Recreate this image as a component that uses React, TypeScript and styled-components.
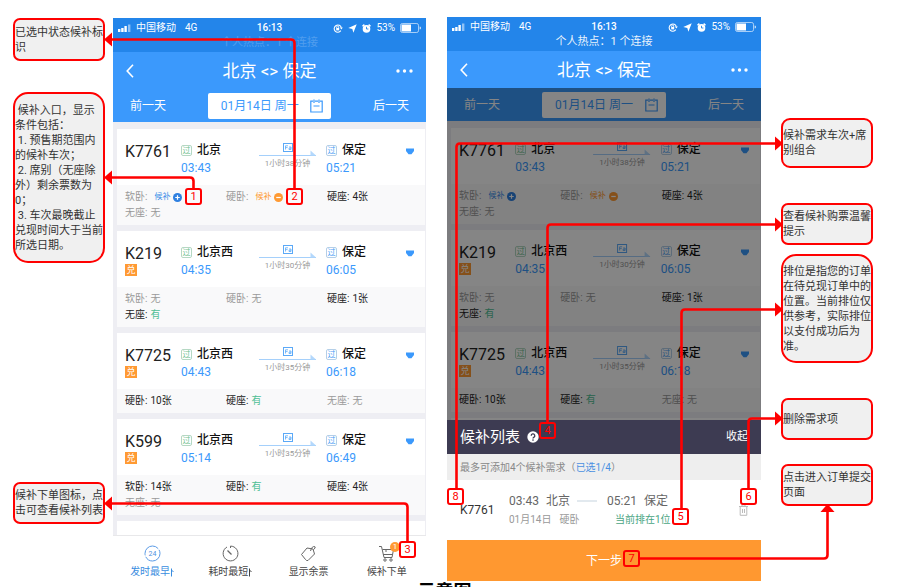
import React from "react";
import styled, { createGlobalStyle, css } from "styled-components";

const RED = "#ff0000";
const BLUE = "#3b99fc";
const STATUS_BLUE = "#2385ea";
const ORANGE = "#ff9a33";
const GREEN = "#4fbf95";

const GlobalStyle = createGlobalStyle`
  * { box-sizing: border-box; }
  body {
    margin: 0;
    background: #ffffff;
    font-family: Roboto, "Noto Sans CJK SC", sans-serif;
    color: #333333;
    overflow: hidden;
  }
  button {
    border: 0;
    padding: 0;
    margin: 0;
    background: none;
    font: inherit;
    color: inherit;
    cursor: pointer;
  }
  svg { display: block; flex: none; }
  h1, h2, h3, p { margin: 0; font-weight: 400; }
`;

/* ---------- page ---------- */

const Page = styled.main`
  height: 100vh;
  overflow: hidden;
`;

const Board = styled.div`
  position: relative;
  display: grid;
  grid-template-columns: 113fr 313fr 21fr 314fr 139fr;
  align-items: start;
`;

const Caption = styled.h1`
  font-size: 18px;
  line-height: 18px;
  font-weight: 700;
  text-align: center;
  color: #000000;
  padding-right: 11px;
`;

/* ---------- notes ---------- */

const NoteColumn = styled.aside<{ $side: "left" | "right" }>`
  display: flex;
  flex-direction: column;
  padding: ${(p) => (p.$side === "left" ? "18px 8px 0 13px" : "118px 27px 0 20px")};
`;

const NoteBox = styled.p<{ $height: number; $gap: number; $radius: number }>`
  display: flex;
  align-items: center;
  min-height: ${(p) => p.$height}px;
  margin-top: ${(p) => p.$gap}px;
  border: 2px solid ${RED};
  border-radius: ${(p) => p.$radius}px;
  background: #f0f0f0;
  font-size: 11px;
  line-height: 15px;
  white-space: pre;
  color: #333333;
`;

type Note = { text: string; height: number; gap: number; radius: number };

const leftNotes: Note[] = [
  { text: "已选中状态候补标\n识", height: 43, gap: 0, radius: 7 },
  {
    text:
      " 候补入口，显示\n条件包括：\n 1. 预售期范围内\n的候补车次；\n 2. 席别（无座除\n外）剩余票数为\n0；\n 3. 车次最晚截止\n兑现时间大于当前\n所选日期。",
    height: 171,
    gap: 31,
    radius: 15,
  },
  { text: "候补下单图标，点\n击可查看候补列表", height: 42, gap: 219, radius: 7 },
];

const rightNotes: Note[] = [
  { text: "候补需求车次+席\n别组合", height: 50, gap: 0, radius: 9 },
  { text: "查看候补购票温馨\n提示", height: 42, gap: 35, radius: 7 },
  {
    text: "排位是指您的订单\n在待兑现订单中的\n位置。当前排位仅\n供参考，实际排位\n以支付成功后为\n准。",
    height: 109,
    gap: 9,
    radius: 15,
  },
  { text: "删除需求项", height: 42, gap: 35, radius: 7 },
  { text: "点击进入订单提交\n页面", height: 42, gap: 24, radius: 7 },
];

const Notes = ({ side, items }: { side: "left" | "right"; items: Note[] }) => (
  <NoteColumn $side={side}>
    {items.map((n) => (
      <NoteBox key={n.text} $height={n.height} $gap={n.gap} $radius={n.radius}>
        {n.text}
      </NoteBox>
    ))}
  </NoteColumn>
);

/* ---------- connectors over the board ---------- */

const Connectors = styled.svg`
  position: absolute;
  top: 0;
  left: 0;
  width: 100%;
  height: 587px;
  pointer-events: none;
`;

const Marker = styled.span<{ $x: number; $y: number }>`
  position: absolute;
  left: ${(p) => (p.$x / 900) * 100}%;
  top: ${(p) => p.$y}px;
  width: 17px;
  height: 17px;
  display: grid;
  place-items: center;
  border: 2px solid ${RED};
  border-radius: 3px;
  font-size: 11px;
  line-height: 11px;
  color: ${RED};
`;

const markers = [
  { n: 1, x: 185, y: 188 },
  { n: 2, x: 286, y: 188 },
  { n: 3, x: 399, y: 541 },
  { n: 4, x: 539, y: 422 },
  { n: 5, x: 672, y: 508 },
  { n: 6, x: 740, y: 488 },
  { n: 7, x: 623, y: 550 },
  { n: 8, x: 447, y: 488 },
];

const wires = [
  "M193.5 188V181Q193.5 177.5 190 177.5H112",
  "M294.5 188V43Q294.5 39.5 291 39.5H112",
  "M407.5 541V507Q407.5 503.5 404 503.5H112",
  "M547.5 422V228Q547.5 224.5 551 224.5H776",
  "M681.5 508V313Q681.5 309.5 685 309.5H776",
  "M748.5 488V422Q748.5 418.5 752 418.5H776",
  "M640 558.5H824Q827.5 558.5 827.5 555V511",
  "M456.5 488V147Q456.5 143.5 460 143.5H776",
];

const leftHeads = [39.5, 177.5, 503.5];
const rightHeads = [143.5, 224.5, 309.5, 418.5];

const Annotations = () => (
  <>
    <Connectors viewBox="0 0 900 587" preserveAspectRatio="none" aria-hidden="true">
      <g fill="none" stroke={RED} strokeWidth="2.6">
        {wires.map((d) => (
          <path key={d} d={d} />
        ))}
      </g>
      <g fill={RED}>
        {leftHeads.map((y) => (
          <path key={y} d={`M104 ${y}L112 ${y - 7}V${y + 7}Z`} />
        ))}
        {rightHeads.map((y) => (
          <path key={y} d={`M783 ${y}L775 ${y - 7}V${y + 7}Z`} />
        ))}
        <path d="M827.5 504L820.500 512H834.500Z" />
      </g>
    </Connectors>
    {markers.map((m) => (
      <Marker key={m.n} $x={m.x} $y={m.y}>
        {m.n}
      </Marker>
    ))}
  </>
);

/* ---------- phone ---------- */

const Phone = styled.section<{ $top: number }>`
  margin-top: ${(p) => p.$top}px;
  display: flex;
  flex-direction: column;
  min-width: 0;
`;

const StatusBar = styled.header`
  height: 34px;
  padding: 3px 5px 0;
  background: ${STATUS_BLUE};
  color: #ffffff;
`;

const StatusRow = styled.div`
  display: grid;
  grid-template-columns: 1fr auto 1fr;
  align-items: center;
  height: 14px;
  font-size: 10px;
  line-height: 14px;
`;

const StatusGroup = styled.div<{ $end?: boolean }>`
  display: flex;
  align-items: center;
  gap: ${(p) => (p.$end ? 5 : 4)}px;
  justify-content: ${(p) => (p.$end ? "flex-end" : "flex-start")};
`;

const Network = styled.span`
  margin-left: 5px;
`;

const Clock = styled.span`
  font-weight: 500;
`;

const Hotspot = styled.p<{ $faint: boolean }>`
  font-size: 11px;
  line-height: 16px;
  text-align: center;
  opacity: ${(p) => (p.$faint ? 0.2 : 0.9)};
`;

const NavBar = styled.nav`
  display: grid;
  grid-template-columns: 34px 1fr 44px;
  align-items: center;
  height: 37px;
  background: ${BLUE};
  color: #ffffff;
`;

const NavTitle = styled.h2`
  padding-left: 10px;
  font-size: 17px;
  line-height: 20px;
  text-align: center;
`;

const NavButton = styled.button`
  display: flex;
  justify-content: center;
`;

const Body = styled.div<{ $dim: boolean; $height: number }>`
  position: relative;
  height: ${(p) => p.$height}px;
  overflow: hidden;
  ${(p) =>
    p.$dim &&
    css`
      &::after {
        content: "";
        position: absolute;
        inset: 0;
        background: rgba(0, 0, 0, 0.48);
      }
    `}
`;

const DateBar = styled.div`
  display: grid;
  grid-template-columns: 1fr 40% 1fr;
  align-items: center;
  height: 33px;
  padding: 0 17px;
  background: ${BLUE};
  color: #ffffff;
  font-size: 12px;
  line-height: 16px;
`;

const DayButton = styled.button<{ $align: "left" | "right" }>`
  text-align: ${(p) => p.$align};
`;

const DatePill = styled.button`
  display: flex;
  align-items: center;
  justify-content: space-between;
  height: 26px;
  margin: 0 -6px;
  padding: 0 8px 0 13px;
  border-radius: 2px;
  background: #ffffff;
  color: ${BLUE};
  white-space: nowrap;
`;

const TrainList = styled.div`
  display: flex;
  flex-direction: column;
  gap: 6px;
  padding: 7px 1px 0 4px;
  background: #eeeef3;
`;

const Card = styled.article`
  background: #ffffff;
`;

const CardInfo = styled.div`
  display: grid;
  grid-template-columns: 56fr 78fr 57fr 90fr 19fr;
  height: 56px;
  padding: 13px 0 0 8px;
`;

const TrainNo = styled.h3`
  font-size: 16px;
  line-height: 20px;
  color: #222222;
`;

const Exchange = styled.span`
  display: grid;
  place-items: center;
  width: 12px;
  height: 12px;
  background: ${ORANGE};
  color: #ffffff;
  font-size: 9px;
  line-height: 12px;
`;

const Stop = styled.div<{ $arrival?: boolean }>`
  padding-left: ${(p) => (p.$arrival ? 10 : 0)}px;
`;

const Station = styled.div`
  display: flex;
  align-items: center;
  gap: 5px;
  height: 16px;
  font-size: 12px;
  line-height: 16px;
  font-weight: 500;
  color: #111111;
  white-space: nowrap;
`;

const PassMark = styled.span<{ $blue?: boolean }>`
  display: grid;
  place-items: center;
  width: 11px;
  height: 11px;
  border: 1px solid ${(p) => (p.$blue ? "#b4cfe8" : "#b5d8c3")};
  border-radius: 2px;
  font-size: 8px;
  line-height: 9px;
  font-weight: 400;
  color: ${(p) => (p.$blue ? "#4aa0f5" : "#6fbf8f")};
`;

const Time = styled.p`
  padding-top: 2px;
  font-size: 12px;
  line-height: 16px;
  color: ${BLUE};
`;

const Trip = styled.div`
  display: flex;
  flex-direction: column;
  align-items: center;
  font-size: 8px;
  line-height: 12px;
  color: #999999;
  white-space: nowrap;
  svg { width: 100%; }
`;

const Expand = styled.button`
  align-self: start;
  justify-self: start;
  padding-top: 6px;
`;

const Seats = styled.div`
  display: grid;
  grid-template-columns: 101fr 101fr 98fr;
  padding: 4px 0 4px 8px;
  background: #f9f9fa;
  font-size: 10px;
  line-height: 16px;
`;

const Seat = styled.span<{ $muted: boolean; $waiting: boolean }>`
  display: flex;
  align-items: center;
  gap: ${(p) => (p.$waiting ? 7 : 3)}px;
  color: ${(p) => (p.$muted ? "#999999" : "#222222")};
  white-space: nowrap;
`;

const SeatValue = styled.span<{ $tone: string }>`
  display: inline-flex;
  align-items: center;
  color: ${(p) => p.$tone};
`;

const WaitLabel = styled.button`
  display: inline-flex;
  align-items: center;
  gap: 3px;
  font-size: 8px;
  line-height: 12px;
`;

/* ---------- tab bar ---------- */

const TabBar = styled.nav`
  display: grid;
  grid-template-columns: repeat(4, 1fr);
  height: 48px;
  border-top: 1px solid #e8e8ea;
  background: #ffffff;
`;

const Tab = styled.button<{ $active?: boolean }>`
  position: relative;
  display: flex;
  flex-direction: column;
  align-items: center;
  gap: 3px;
  padding-top: 9px;
  font-size: 10px;
  line-height: 14px;
  color: ${(p) => (p.$active ? "#3a8de0" : "#444444")};
`;

const TabLabel = styled.span`
  display: flex;
  align-items: center;
  gap: 1px;
`;

const CartCount = styled.span`
  position: absolute;
  top: 6px;
  left: calc(50% + 3px);
  width: 10px;
  height: 10px;
  border-radius: 5px;
  background: ${ORANGE};
  color: #ffffff;
  font-size: 8px;
  line-height: 10px;
`;

/* ---------- waiting-list sheet ---------- */

const SheetHeader = styled.div`
  display: flex;
  align-items: center;
  gap: 7px;
  height: 34px;
  padding: 0 13px;
  background: #3d3b52;
  color: #ffffff;
`;

const SheetTitle = styled.h3`
  font-size: 15px;
  line-height: 20px;
`;

const Collapse = styled.button`
  margin-left: auto;
  font-size: 11px;
  line-height: 16px;
`;

const SheetHint = styled.p`
  height: 26px;
  padding-left: 13px;
  background: #eeeeee;
  font-size: 10px;
  line-height: 27px;
  color: #888888;
`;

const Picked = styled.span`
  color: #4a90e2;
`;

const Request = styled.div`
  display: grid;
  grid-template-columns: 49fr 98fr 132fr 9px;
  align-items: center;
  height: 60px;
  padding: 0 13px;
  background: #ffffff;
`;

const RequestNo = styled.span`
  font-size: 12px;
  line-height: 16px;
`;

const RequestPart = styled.div`
  display: flex;
  flex-direction: column;
  gap: 3px;
  white-space: nowrap;
`;

const RequestMain = styled.span`
  display: flex;
  align-items: center;
  gap: 7px;
  font-size: 12px;
  line-height: 16px;
  color: #666666;
`;

const RequestSub = styled.span<{ $green?: boolean }>`
  display: flex;
  gap: 8px;
  padding-left: ${(p) => (p.$green ? 8 : 0)}px;
  font-size: 10px;
  line-height: 16px;
  color: ${(p) => (p.$green ? "#4aa583" : "#999999")};
`;

const NextButton = styled.button`
  height: 41px;
  background: #ff9830;
  color: #ffffff;
  font-size: 12px;
  line-height: 16px;
`;

/* ---------- icons ---------- */

const SignalIcon = () => (
  <svg width="14" height="9" viewBox="0 0 14 9" fill="#fff" aria-hidden="true">
    <rect x="0" y="5" width="2.400" height="3" />
    <rect x="3.200" y="4" width="2.400" height="4" />
    <rect x="6.400" y="2" width="2.400" height="6" />
    <rect x="10" y="0.500" width="2.400" height="7.500" opacity="0.5" />
  </svg>
);

const LockIcon = () => (
  <svg width="10" height="9" viewBox="0 0 10 9" fill="none" stroke="#fff" strokeWidth="1.100" aria-hidden="true">
    <path d="M7.800 6.600A3.600 3.600 0 1 1 8.300 3.700" />
    <path d="M6.800 3.600L8.400 5.400L9.800 3.600Z" fill="#fff" stroke="none" />
    <rect x="3.200" y="4" width="3" height="2.400" fill="#fff" stroke="none" />
    <path d="M3.700 4V3a1 1 0 0 1 2 0v1" strokeWidth="0.800" />
  </svg>
);

const LocationIcon = () => (
  <svg width="9" height="9" viewBox="0 0 9 9" fill="#fff" aria-hidden="true">
    <path d="M8.700 0.300L5.400 8.800L4.300 4.900L0.300 4Z" />
  </svg>
);

const AlarmIcon = () => (
  <svg width="9" height="9" viewBox="0 0 9 9" aria-hidden="true">
    <circle cx="4.500" cy="4.900" r="3.800" fill="#fff" />
    <path d="M0.500 2.200L2.400 0.600M8.500 2.200L6.600 0.600" stroke="#fff" strokeWidth="1.500" />
    <path d="M4.500 2.800V5H6.400" stroke={STATUS_BLUE} strokeWidth="0.900" fill="none" />
  </svg>
);

const BatteryIcon = () => (
  <svg width="21" height="10" viewBox="0 0 21 10" aria-hidden="true">
    <rect x="0.500" y="0.500" width="18" height="9" rx="1.800" fill="none" stroke="#fff" strokeOpacity="0.600" />
    <rect x="1.500" y="1.500" width="9.500" height="7" fill="#fff" />
    <path d="M19.600 3.500v3a1.500 1.500 0 0 0 0-3Z" fill="#fff" opacity="0.700" />
  </svg>
);

const BackIcon = () => (
  <svg width="8" height="14" viewBox="0 0 8 14" fill="none" stroke="#fff" strokeWidth="1.600" aria-hidden="true">
    <path d="M7 0.800L1.200 7L7 13.200" />
  </svg>
);

const MoreIcon = () => (
  <svg width="17" height="4" viewBox="0 0 17 4" fill="#fff" aria-hidden="true">
    <circle cx="2" cy="2" r="1.700" />
    <circle cx="8.500" cy="2" r="1.700" />
    <circle cx="15" cy="2" r="1.700" />
  </svg>
);

const CalendarIcon = () => (
  <svg width="13" height="14" viewBox="0 0 13 14" fill="none" stroke={BLUE} strokeWidth="1.200" aria-hidden="true">
    <path d="M3 2.200H0.800V13H12.200V2.200H10M5 2.200H8M4 0.500V4M9 0.500V4M3.500 7H9.500" />
  </svg>
);

const TripIcon = () => (
  <svg height="16" viewBox="0 0 57 16" fill="none" aria-hidden="true">
    <rect x="24.500" y="1.500" width="9" height="8" stroke="#5ba9f7" />
    <path d="M26.500 7.500V3.800H29M26.500 5.600H28.600M30 5H32M30 7.500H32V5M30 7.500V6.200H32" stroke="#5ba9f7" strokeWidth="0.800" />
    <path d="M0 13.500H57" stroke="#a5d0fb" strokeWidth="1.200" />
    <path d="M51.500 8.500L57 13.500H51.500Z" fill="#b4d8fc" />
  </svg>
);

const CaretIcon = () => (
  <svg width="8" height="7" viewBox="0 0 8 7" fill={BLUE} aria-hidden="true">
    <path d="M0 0.500H8V3L5.500 6.200H2.500L0 3Z" />
  </svg>
);

const CircleIcon = ({ plus }: { plus: boolean }) => (
  <svg width="9" height="9" viewBox="0 0 8 8" aria-hidden="true">
    <circle cx="4" cy="4" r="4" fill={plus ? "#2f80e0" : ORANGE} />
    <path d={plus ? "M2 4H6M4 2V6" : "M2 4H6"} stroke="#fff" strokeWidth="1.100" />
  </svg>
);

const ArrowUpIcon = () => (
  <svg width="3" height="9" viewBox="0 0 3 9" fill="none" stroke="currentColor" aria-hidden="true">
    <path d="M0.500 0.500V8.500M0.500 2L2.500 4" />
  </svg>
);

const ClockIcon = () => (
  <svg width="17" height="17" viewBox="0 0 17 17" aria-hidden="true">
    <circle cx="8.500" cy="8.500" r="7.500" fill="none" stroke="#5b9be6" strokeDasharray="20 1.500" />
    <text x="8.500" y="11" textAnchor="middle" fontSize="7" fill="#4a90e2">
      24
    </text>
  </svg>
);

const TimerIcon = () => (
  <svg width="17" height="17" viewBox="0 0 17 17" fill="none" stroke="#666" aria-hidden="true">
    <path d="M5 2A7.400 7.400 0 1 0 8.500 1.100V3" />
    <path d="M5.500 5.500L9.500 9.500" strokeWidth="1.300" />
  </svg>
);

const TagIcon = () => (
  <svg width="17" height="17" viewBox="0 0 17 17" fill="none" stroke="#666" aria-hidden="true">
    <path d="M1.500 9.500L7 3L13 4L14.500 9L8 15.500Q6.500 16 5.500 14.500Z" />
    <path d="M10.500 6Q12 0.500 15 1.800Q16 3 13.500 4.500" />
  </svg>
);

const CartIcon = () => (
  <svg width="17" height="17" viewBox="0 0 17 17" fill="none" stroke="#666" aria-hidden="true">
    <path d="M1 1.500H3.500L6 12.500H14L15.500 4.500H4.500M5.200 9.500H14.400M8 4.500V7" />
    <circle cx="7" cy="15" r="1.200" />
    <circle cx="13" cy="15" r="1.200" />
  </svg>
);

const HelpIcon = () => (
  <svg width="12" height="12" viewBox="0 0 12 12" aria-hidden="true">
    <circle cx="6" cy="6" r="5.700" fill="#fff" />
    <path d="M4.200 4.700a1.800 1.800 0 1 1 2.600 1.600q-.8.400-.8 1.100" fill="none" stroke="#3d3b52" strokeWidth="1.300" />
    <circle cx="6" cy="9.100" r="0.800" fill="#3d3b52" />
  </svg>
);

const DashIcon = () => (
  <svg width="20" height="2" viewBox="0 0 20 2" aria-hidden="true">
    <path d="M0 1H20" stroke="#c5d3de" />
  </svg>
);

const TrashIcon = () => (
  <svg width="9" height="12" viewBox="0 0 9 12" fill="none" stroke="#bbb" aria-hidden="true">
    <path d="M0 2.500H9M3 2.500V0.800H6V2.500M1.200 2.500V11.300H7.800V2.500M3.500 5V9M5.500 5V9" />
  </svg>
);

/* ---------- data ---------- */

type SeatInfo = { name: string; value: string; kind: "count" | "yes" | "none" | "add" | "added" };
type Train = {
  no: string;
  exchange: boolean;
  from: string;
  depart: string;
  arrive: string;
  duration: string;
  seats: SeatInfo[];
};

const trains: Train[] = [
  {
    no: "K7761",
    exchange: false,
    from: "北京",
    depart: "03:43",
    arrive: "05:21",
    duration: "1小时38分钟",
    seats: [
      { name: "软卧", value: "候补", kind: "add" },
      { name: "硬卧", value: "候补", kind: "added" },
      { name: "硬座", value: "4张", kind: "count" },
      { name: "无座", value: "无", kind: "none" },
    ],
  },
  {
    no: "K219",
    exchange: true,
    from: "北京西",
    depart: "04:35",
    arrive: "06:05",
    duration: "1小时30分钟",
    seats: [
      { name: "软卧", value: "无", kind: "none" },
      { name: "硬卧", value: "无", kind: "none" },
      { name: "硬座", value: "1张", kind: "count" },
      { name: "无座", value: "有", kind: "yes" },
    ],
  },
  {
    no: "K7725",
    exchange: true,
    from: "北京西",
    depart: "04:43",
    arrive: "06:18",
    duration: "1小时35分钟",
    seats: [
      { name: "硬卧", value: "10张", kind: "count" },
      { name: "硬座", value: "有", kind: "yes" },
      { name: "无座", value: "无", kind: "none" },
    ],
  },
  {
    no: "K599",
    exchange: true,
    from: "北京西",
    depart: "05:14",
    arrive: "06:49",
    duration: "1小时35分钟",
    seats: [
      { name: "软卧", value: "14张", kind: "count" },
      { name: "硬卧", value: "有", kind: "yes" },
      { name: "硬座", value: "4张", kind: "count" },
      { name: "无座", value: "无", kind: "none" },
    ],
  },
];

const tones = {
  count: "inherit",
  yes: GREEN,
  none: "inherit",
  add: "#3a8de8",
  added: ORANGE,
};

/* ---------- composed parts ---------- */

const SeatCell = ({ seat }: { seat: SeatInfo }) => {
  const waiting = seat.kind === "add" || seat.kind === "added";
  return (
    <Seat $muted={seat.kind === "none" || waiting} $waiting={waiting}>
      {seat.name}:
      <SeatValue $tone={tones[seat.kind]}>
        {waiting ? (
          <WaitLabel type="button">
            {seat.value}
            <CircleIcon plus={seat.kind === "add"} />
          </WaitLabel>
        ) : (
          seat.value
        )}
      </SeatValue>
    </Seat>
  );
};

const TrainCard = ({ train }: { train: Train }) => (
  <Card>
    <CardInfo>
      <div>
        <TrainNo>{train.no}</TrainNo>
        {train.exchange && <Exchange>兑</Exchange>}
      </div>
      <Stop>
        <Station>
          <PassMark>过</PassMark>
          {train.from}
        </Station>
        <Time>{train.depart}</Time>
      </Stop>
      <Trip>
        <TripIcon />
        {train.duration}
      </Trip>
      <Stop $arrival>
        <Station>
          <PassMark $blue>过</PassMark>
          保定
        </Station>
        <Time>{train.arrive}</Time>
      </Stop>
      <Expand type="button" aria-label="展开">
        <CaretIcon />
      </Expand>
    </CardInfo>
    <Seats>
      {train.seats.map((s) => (
        <SeatCell key={s.name} seat={s} />
      ))}
    </Seats>
  </Card>
);

const PhoneTop = ({ faint }: { faint: boolean }) => (
  <>
    <StatusBar>
      <StatusRow>
        <StatusGroup>
          <SignalIcon />
          <span>中国移动</span>
          <Network>4G</Network>
        </StatusGroup>
        <Clock>16:13</Clock>
        <StatusGroup $end>
          <LockIcon />
          <LocationIcon />
          <AlarmIcon />
          <span>53%</span>
          <BatteryIcon />
        </StatusGroup>
      </StatusRow>
      <Hotspot $faint={faint}>个人热点：1 个连接</Hotspot>
    </StatusBar>
    <NavBar>
      <NavButton type="button" aria-label="返回">
        <BackIcon />
      </NavButton>
      <NavTitle>北京 &lt;&gt; 保定</NavTitle>
      <NavButton type="button" aria-label="更多">
        <MoreIcon />
      </NavButton>
    </NavBar>
  </>
);

const PhoneBody = ({ dim, height, items }: { dim: boolean; height: number; items: Train[] }) => (
  <Body $dim={dim} $height={height}>
    <DateBar>
      <DayButton type="button" $align="left">
        前一天
      </DayButton>
      <DatePill type="button">
        01月14日 周一
        <CalendarIcon />
      </DatePill>
      <DayButton type="button" $align="right">
        后一天
      </DayButton>
    </DateBar>
    <TrainList>
      {items.map((t) => (
        <TrainCard key={t.no} train={t} />
      ))}
      <Card>
        <CardInfo />
      </Card>
    </TrainList>
  </Body>
);

export default function App() {
  return (
    <Page>
      <GlobalStyle />
      <Board>
        <Notes side="left" items={leftNotes} />

        <Phone $top={18}>
          <PhoneTop faint />
          <PhoneBody dim={false} height={446} items={trains} />
          <TabBar>
            <Tab type="button" $active>
              <ClockIcon />
              <TabLabel>
                发时最早
                <ArrowUpIcon />
              </TabLabel>
            </Tab>
            <Tab type="button">
              <TimerIcon />
              <TabLabel>
                耗时最短
                <ArrowUpIcon />
              </TabLabel>
            </Tab>
            <Tab type="button">
              <TagIcon />
              <TabLabel>显示余票</TabLabel>
            </Tab>
            <Tab type="button">
              <CartIcon />
              <CartCount>1</CartCount>
              <TabLabel>候补下单</TabLabel>
            </Tab>
          </TabBar>
        </Phone>

        <div />

        <Phone $top={17}>
          <PhoneTop faint={false} />
          <PhoneBody dim height={332} items={trains.slice(0, 3)} />
          <SheetHeader>
            <SheetTitle>候补列表</SheetTitle>
            <HelpIcon />
            <Collapse type="button">收起</Collapse>
          </SheetHeader>
          <SheetHint>
            最多可添加4个候补需求（<Picked>已选1/4</Picked>）
          </SheetHint>
          <Request>
            <RequestNo>K7761</RequestNo>
            <RequestPart>
              <RequestMain>
                <span>03:43</span>
                <span>北京</span>
                <DashIcon />
              </RequestMain>
              <RequestSub>
                <span>01月14日</span>
                <span>硬卧</span>
              </RequestSub>
            </RequestPart>
            <RequestPart>
              <RequestMain>
                <span>05:21</span>
                <span>保定</span>
              </RequestMain>
              <RequestSub $green>当前排在1位</RequestSub>
            </RequestPart>
            <button type="button" aria-label="删除">
              <TrashIcon />
            </button>
          </Request>
          <NextButton type="button">下一步</NextButton>
        </Phone>

        <Annotations />
        <Notes side="right" items={rightNotes} />
      </Board>
      <Caption>示意图</Caption>
    </Page>
  );
}
